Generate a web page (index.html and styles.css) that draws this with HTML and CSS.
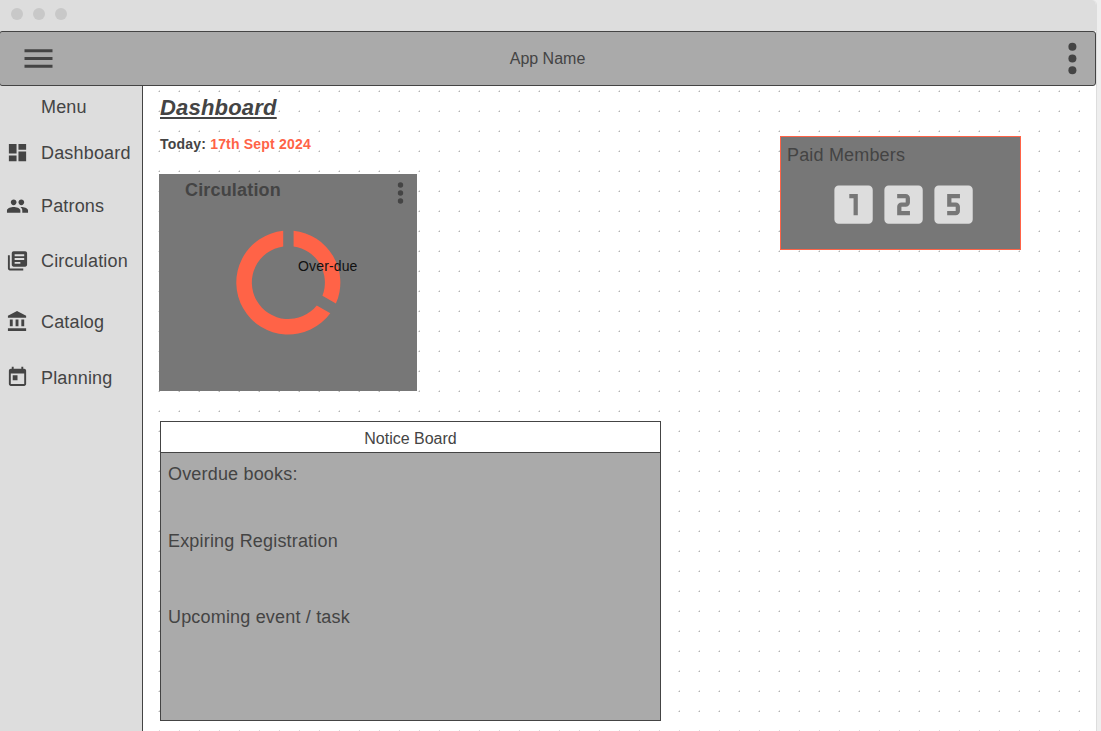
FILE: index.html
```html
<!DOCTYPE html>
<html lang="en">
<head>
<meta charset="utf-8">
<title>Dashboard</title>
<link rel="stylesheet" href="styles.css">
</head>
<body>
<div class="window">
  <div class="titlebar"><i class="control"></i><i class="control"></i><i class="control"></i></div>
  <header class="appbar">
    <svg class="hamburger" width="28" height="20" viewBox="0 0 28 20"><path d="M0 .5h28v3H0zM0 8.2h28v3H0zM0 15.9h28v3H0z"/></svg>
    <span class="app-name">App Name</span>
    <svg class="more" width="10" height="34" viewBox="0 0 10 34"><circle cx="4.400" cy="4.700" r="4"/><circle cx="4.400" cy="16.500" r="4"/><circle cx="4.400" cy="28.300" r="4"/></svg>
  </header>
  <div class="body">
    <nav class="sidebar">
      <div class="nav-item nav-heading"><span>Menu</span></div>
      <div class="nav-item"><svg class="icon" viewBox="0 1 24 24"><path d="M3 13h8V3H3v10zm0 8h8v-6H3v6zm10 0h8V11h-8v10zm0-18v6h8V3h-8z"/></svg><span>Dashboard</span></div>
      <div class="nav-item"><svg class="icon" viewBox="0 .4 24 24"><path d="M16 11c1.660 0 2.990-1.340 2.990-3S17.660 5 16 5s-3 1.340-3 3 1.340 3 3 3zm-8 0c1.660 0 2.990-1.340 2.990-3S9.660 5 8 5 5 6.340 5 8s1.340 3 3 3zm0 2c-2.330 0-7 1.170-7 3.500V19h14v-2.500c0-2.330-4.670-3.500-7-3.500zm8 0c-.29 0-.62.02-.97.05 1.160.84 1.970 1.970 1.970 3.450V19h6v-2.500c0-2.330-4.670-3.500-7-3.500z"/></svg><span>Patrons</span></div>
      <div class="nav-item"><svg class="icon" viewBox="0 .6 24 24"><path d="M4 6H2v14c0 1.100.9 2 2 2h14v-2H4V6zm16-4H8c-1.100 0-2 .9-2 2v12c0 1.100.9 2 2 2h12c1.100 0 2-.9 2-2V4c0-1.100-.9-2-2-2zm-1 9H9V9h10v2zm-4 4H9v-2h6v2zm4-8H9V5h10v2z"/></svg><span>Circulation</span></div>
      <div class="nav-item"><svg class="icon" viewBox="0 1 24 24"><path d="M4 10v7h3v-7H4zm6 0v7h3v-7h-3zM2 22h19v-3H2v3zm14-12v7h3v-7h-3zm-4.500-9L2 6v2h19V6l-9.500-5z"/></svg><span>Catalog</span></div>
      <div class="nav-item"><svg class="icon" viewBox="0 1.300 24 24"><path d="M19 3h-1V1h-2v2H8V1H6v2H5c-1.110 0-1.990.9-1.990 2L3 19c0 1.100.89 2 2 2h14c1.100 0 2-.9 2-2V5c0-1.100-.9-2-2-2zm0 16H5V8h14v11zM7 10h5v5H7z"/></svg><span>Planning</span></div>
    </nav>
    <main class="content">
      <section class="overview">
        <div class="overview-left">
          <h1 class="title">Dashboard</h1>
          <p class="today">Today: <span class="date">17th Sept 2024</span></p>
          <article class="circulation">
            <div class="card-head">
              <h2 class="card-title">Circulation</h2>
              <svg class="card-more" width="6" height="24" viewBox="0 0 6 24"><circle cx="2.500" cy="4" r="2.700"/><circle cx="2.500" cy="12" r="2.700"/><circle cx="2.500" cy="20" r="2.700"/></svg>
            </div>
            <div class="chart">
              <svg width="106" height="106" viewBox="-52.400 -52.500 106 106"><path d="M-5.200 -51.700A52 52 0 1 0 41.900 30.700L28.400 22.900A36.500 36.500 0 1 1 -5.200 -36.100ZM5.200 -51.700A52 52 0 0 1 47.500 21.100L34 13.300A36.500 36.500 0 0 0 5.200 -36.100Z"/></svg>
              <span class="chart-label">Over-due</span>
            </div>
          </article>
        </div>
        <article class="members">
          <h2 class="members-title">Paid Members</h2>
          <svg class="digits" width="140" height="40" viewBox="0 0 140 40">
            <g transform="translate(-6 -5.900) scale(2.130)"><path d="M19 3H5c-1.100 0-2 .9-2 2v14c0 1.100.9 2 2 2h14c1.100 0 2-.9 2-2V5c0-1.100-.9-2-2-2zm-5 14h-2V9h-2V7h4v10z"/></g>
            <g transform="translate(44 -5.900) scale(2.130)"><path d="M19 3H5c-1.100 0-2 .9-2 2v14c0 1.100.9 2 2 2h14c1.100 0 2-.9 2-2V5c0-1.100-.9-2-2-2zm-4 8c0 1.110-.9 2-2 2h-2v2h4v2H9v-4c0-1.110.9-2 2-2h2V9H9V7h4c1.100 0 2 .89 2 2v2z"/></g>
            <g transform="translate(94 -5.900) scale(2.130)"><path d="M19 3H5c-1.100 0-2 .9-2 2v14c0 1.100.9 2 2 2h14c1.100 0 2-.9 2-2V5c0-1.100-.9-2-2-2zm-4 6h-4v2h2c1.100 0 2 .89 2 2v2c0 1.110-.9 2-2 2H9v-2h4v-2H9V7h6v2z"/></g>
          </svg>
        </article>
      </section>
      <section class="notice">
        <h2 class="notice-head">Notice Board</h2>
        <div class="notice-body">
          <p>Overdue books:</p>
          <p>Expiring Registration</p>
          <p>Upcoming event / task</p>
        </div>
      </section>
    </main>
  </div>
</div>
</body>
</html>
```
FILE: styles.css
```css
* { box-sizing: border-box; }
body {
  margin: 0;
  height: 731px;
  overflow: hidden;
  background: #eee;
  color: #444;
  font-family: "Liberation Sans", Arial, sans-serif;
}
h1, h2, p { margin: 0; font-weight: normal; }
svg { display: block; flex: none; fill: #444; overflow: visible; }

.window {
  width: 1097px;
  height: 731px;
  display: flex;
  flex-direction: column;
  border-right: 1px solid #ddd;
  border-top-right-radius: 5px;
  overflow: hidden;
  background-color: #fff;
  background-image:
    radial-gradient(circle at 19.5px 11.5px, #b4b4b4 .6px, transparent .6px),
    radial-gradient(circle at 18.5px 11.5px, #ddd .6px, transparent .6px),
    radial-gradient(circle at 19.5px 10.5px, #ddd .6px, transparent .6px);
  background-size: 20px 20px;
}
.titlebar {
  height: 31px;
  flex: none;
  display: flex;
  gap: 10px;
  padding: 8px 11px;
  background: #ddd;
}
.control { width: 12px; height: 12px; border-radius: 50%; background: #c8c8c8; }

.appbar {
  height: 55px;
  flex: none;
  margin-left: -1px;
  display: flex;
  align-items: center;
  justify-content: space-between;
  padding: 0 17px 0 24px;
  border: 1px solid #444;
  border-radius: 3px;
  background: #aaa;
  font-size: 16px;
}
.hamburger { transform: translate(.5px, -.2px); }
.app-name { margin-left: -25px; }

.body { flex: 1; display: flex; min-height: 0; }
.sidebar {
  width: 143px;
  flex: none;
  display: grid;
  grid-template-rows: 42px 50px 56px 54px 68px 44px;
  align-content: start;
  border-right: 1px solid #444;
  background: #ddd;
  font-size: 18px;
  letter-spacing: .17px;
}
.nav-item { display: flex; align-items: center; gap: 12px; padding-left: 6px; white-space: nowrap; }
.nav-heading { padding-left: 41px; }
.icon { width: 23px; height: 23px; }

.content { flex: 1; padding: 0 75px 0 16px; }
.overview { display: flex; justify-content: space-between; align-items: flex-start; height: 335px; }
.title {
  padding: 8px 0 0 1px;
  height: 48px;
  font-size: 22px;
  line-height: 27px;
  font-weight: bold;
  font-style: italic;
  letter-spacing: .2px;
  text-decoration: underline;
}
.today { height: 40px; padding-left: 1px; font-size: 14px; line-height: 20px; font-weight: bold; letter-spacing: .2px; }
.date { color: #ff6347; }

.circulation { width: 258px; height: 217px; background: #777; }
.card-head { display: flex; justify-content: space-between; padding: 5px 13px 0 26px; height: 56px; }
.card-title { font-size: 18px; line-height: 22px; font-weight: bold; letter-spacing: .17px; }
.card-more { margin-top: 2px; }
.chart { width: 106px; height: 106px; margin-left: 77px; position: relative; }
.chart svg { fill: #ff6347; }
.chart-label { position: absolute; left: 62px; top: 28px; color: #111; font-size: 14px; line-height: 16px; letter-spacing: .15px; white-space: nowrap; }

.members { width: 241px; height: 114px; margin-top: 50px; border: 1px solid #ff6347; background: #777; }
.members-title { padding: 8px 0 0 6px; font-size: 18px; line-height: 21px; height: 48px; letter-spacing: .17px; }
.digits { margin-left: 53px; fill: #ddd; }

.notice { width: 501px; height: 300px; margin-left: 1px; border: 1px solid #444; background: #aaa; }
.notice-head { height: 31px; border-bottom: 1px solid #444; background: #fff; font-size: 16px; line-height: 33px; text-align: center; }
.notice-body { display: grid; grid-template-rows: 67px 76px 30px; padding: 11px 0 0 7px; font-size: 18px; line-height: 21px; letter-spacing: .18px; }
```
